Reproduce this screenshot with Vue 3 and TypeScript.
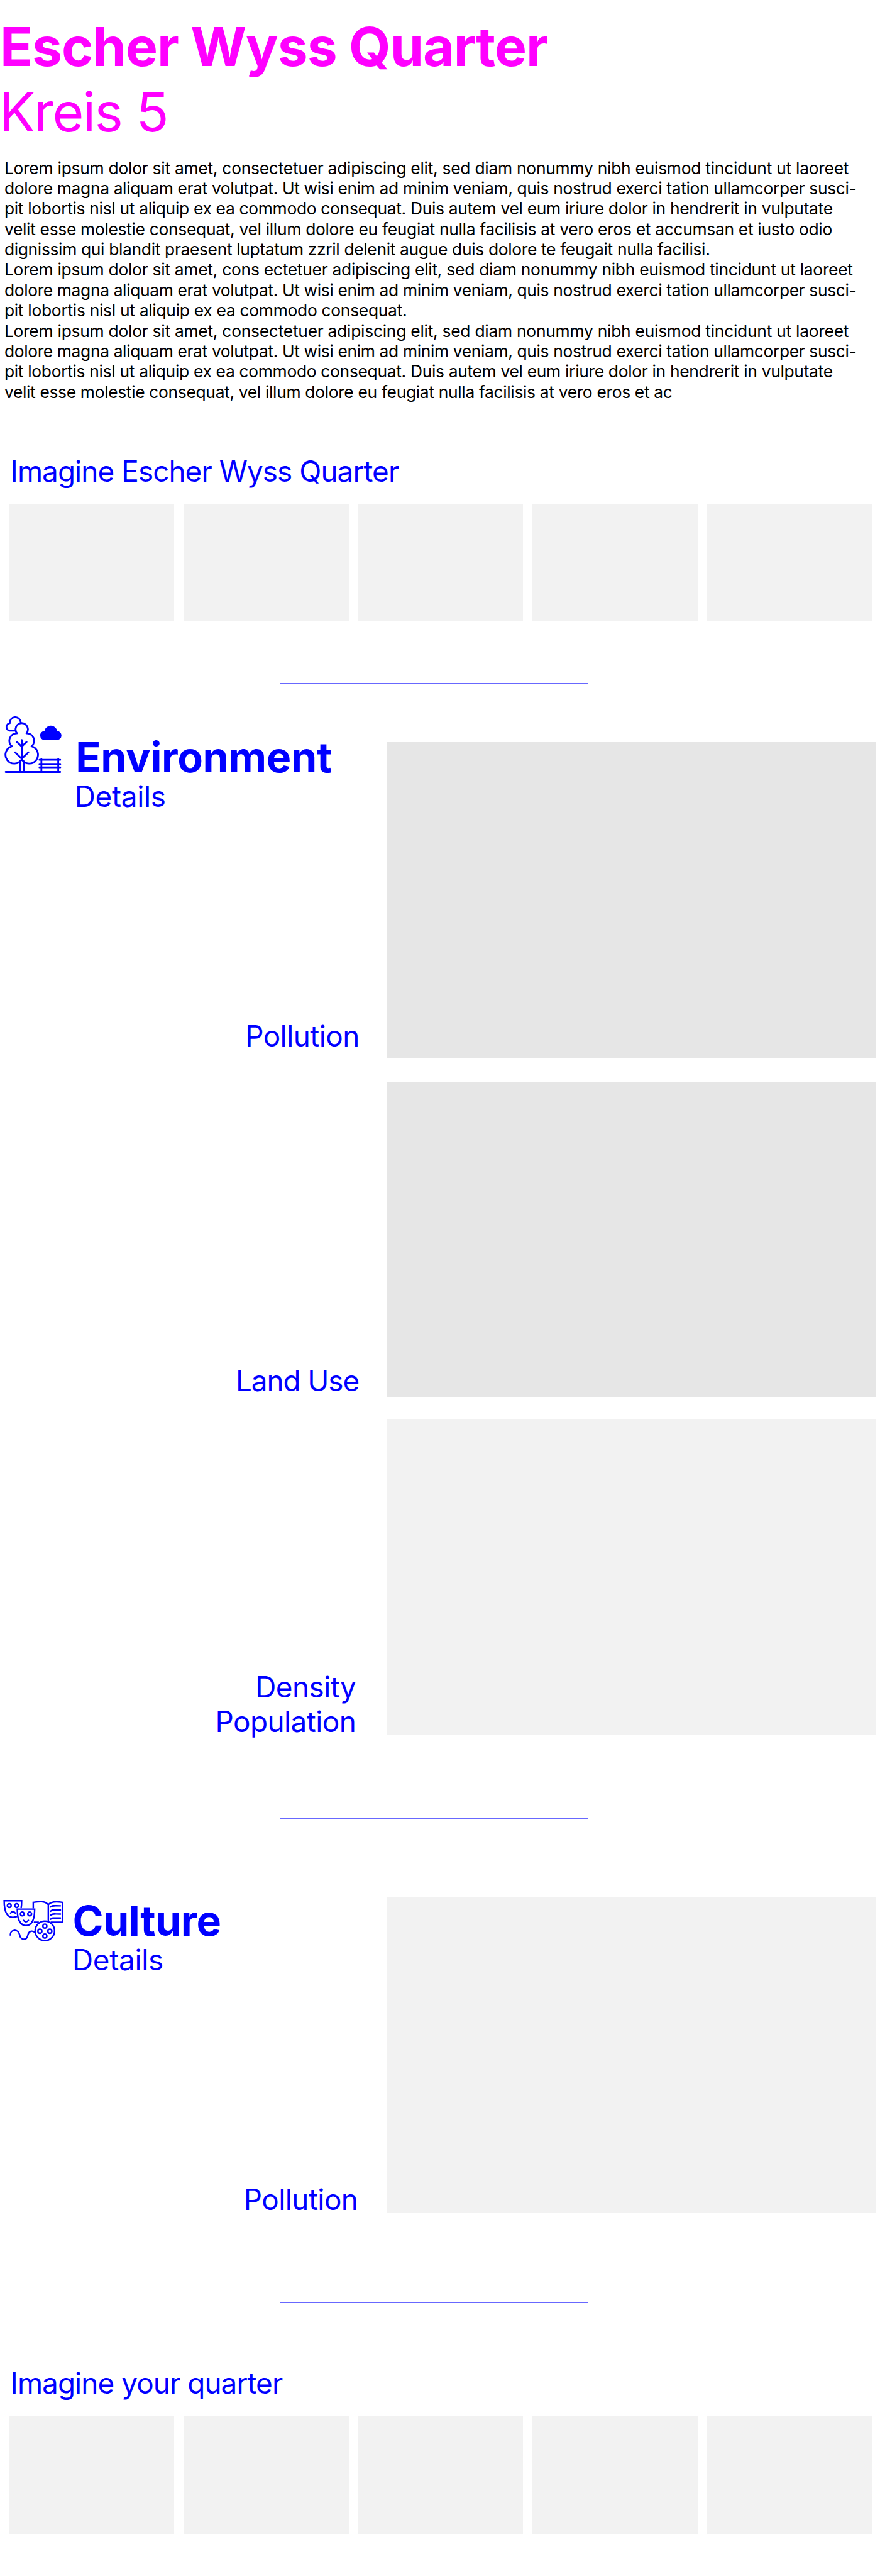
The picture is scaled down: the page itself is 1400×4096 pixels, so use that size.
<script setup lang="ts">
interface Line {
  text: string
  tracking: number
}

const paragraph: Line[] = [
  { text: 'Lorem ipsum dolor sit amet, consectetuer adipiscing elit, sed diam nonummy nibh euismod tincidunt ut laoreet', tracking: -0.259 },
  { text: 'dolore magna aliquam erat volutpat. Ut wisi enim ad minim veniam, quis nostrud exerci tation ullamcorper susci-', tracking: -0.361 },
  { text: 'pit lobortis nisl ut aliquip ex ea commodo consequat. Duis autem vel eum iriure dolor in hendrerit in vulputate', tracking: -0.318 },
  { text: 'velit esse molestie consequat, vel illum dolore eu feugiat nulla facilisis at vero eros et accumsan et iusto odio', tracking: -0.31 },
  { text: 'dignissim qui blandit praesent luptatum zzril delenit augue duis dolore te feugait nulla facilisi.', tracking: -0.339 },
  { text: 'Lorem ipsum dolor sit amet, cons ectetuer adipiscing elit, sed diam nonummy nibh euismod tincidunt ut laoreet', tracking: -0.265 },
  { text: 'dolore magna aliquam erat volutpat. Ut wisi enim ad minim veniam, quis nostrud exerci tation ullamcorper susci-', tracking: -0.361 },
  { text: 'pit lobortis nisl ut aliquip ex ea commodo consequat.', tracking: -0.29 },
  { text: 'Lorem ipsum dolor sit amet, consectetuer adipiscing elit, sed diam nonummy nibh euismod tincidunt ut laoreet', tracking: -0.259 },
  { text: 'dolore magna aliquam erat volutpat. Ut wisi enim ad minim veniam, quis nostrud exerci tation ullamcorper susci-', tracking: -0.361 },
  { text: 'pit lobortis nisl ut aliquip ex ea commodo consequat. Duis autem vel eum iriure dolor in hendrerit in vulputate', tracking: -0.318 },
  { text: 'velit esse molestie consequat, vel illum dolore eu feugiat nulla facilisis at vero eros et ac', tracking: -0.33 },
]

const bookLines: number[] = [117, 150, 182, 213]
</script>

<template>
  <main class="page">
    <header class="intro">
      <h1 class="title">Escher Wyss Quarter</h1>
      <p class="district">Kreis 5</p>
      <div class="copy">
        <div v-for="(line, i) in paragraph" :key="i" :style="{ letterSpacing: line.tracking + 'px' }">{{ line.text }}</div>
      </div>
    </header>

    <section class="imagine">
      <h2 class="subhead">Imagine Escher Wyss Quarter</h2>
      <div class="gallery">
        <div v-for="n in 5" :key="n" class="card"></div>
      </div>
    </section>

    <hr class="rule rule-first" />

    <section class="topic environment">
      <div class="row">
        <div class="side">
          <div class="heading">
            <svg class="icon" viewBox="36 60 450 445" fill="none" stroke="currentColor" stroke-width="14" stroke-linecap="round" stroke-linejoin="round">
              <path d="M119 173H76A30 30 0 0 1 78 114A43 43 0 0 1 164 106" />
              <path d="M172 398A69 69 0 1 1 95 295A58 58 0 0 1 135 193A48.5 48.5 0 1 1 209 193A58 58 0 0 1 249 295A69 69 0 1 1 172 398" />
              <path d="M172 246V398M134 261L172 297L210 261M120 342L172 393L224 342M46 496H474" />
              <path d="M157 412V494M187 412V494" />
              <path d="M311 401H474M311 438H474M311 460H474M326 393V494M458 393V494" />
              <path d="M354 246A36 36 0 0 1 350 174A51 51 0 0 1 450 174A36 36 0 0 1 445 246Z" fill="currentColor" stroke="none" />
            </svg>
            <div class="names">
              <h2 class="name">Environment</h2>
              <p class="details">Details</p>
            </div>
          </div>
          <p class="caption pollution">Pollution</p>
        </div>
        <div class="panel dark"></div>
      </div>
      <div class="row second">
        <div class="side"><p class="caption land">Land Use</p></div>
        <div class="panel dark"></div>
      </div>
      <div class="row third">
        <div class="side"><p class="caption density">Density<br />Population</p></div>
        <div class="panel"></div>
      </div>
    </section>

    <hr class="rule rule-second" />

    <section class="topic culture">
      <div class="row">
        <div class="side">
          <div class="heading">
            <svg class="icon" viewBox="22 66 476 332" fill="none" stroke="currentColor" stroke-width="12" stroke-linecap="round">
              <path d="M133 200C120 205 109 207 98 207C54 207 30 160 30 77H167C167 100 166 118 163 135" stroke-linecap="butt" />
              <circle cx="70" cy="115" r="15" />
              <circle cx="128" cy="115" r="15" />
              <path d="M80 174Q99 151 118 174" />
              <path d="M133 143H269C269 225 245 271 201 271C157 271 133 225 133 143Z" />
              <circle cx="172" cy="181" r="15" />
              <circle cx="230" cy="181" r="15" />
              <path d="M182 231Q201 255 220 231" />
              <path d="M258 138V90C305 82 349 77 376 108C398 82 440 82 487 90V246H394M376 108V242M262 246H302" stroke-linecap="butt" />
              <path v-for="y in bookLines" :key="y" :d="`M394 ${y + 9}C411 ${y - 6} 420 ${y} 471 ${y}`" />
              <circle cx="349" cy="313" r="76" />
              <circle cx="349" cy="276" r="16" />
              <circle cx="310" cy="316" r="16" />
              <circle cx="388" cy="316" r="16" />
              <circle cx="349" cy="354" r="16" />
              <path d="M78 345C78 300 138 296 150 340C160 392 208 390 216 345C226 308 258 310 272 328" />
            </svg>
            <div class="names">
              <h2 class="name">Culture</h2>
              <p class="details">Details</p>
            </div>
          </div>
          <p class="caption pollution">Pollution</p>
        </div>
        <div class="panel"></div>
      </div>
    </section>

    <hr class="rule rule-third" />

    <section class="imagine own">
      <h2 class="subhead">Imagine your quarter</h2>
      <div class="gallery">
        <div v-for="n in 5" :key="n" class="card"></div>
      </div>
    </section>
  </main>
</template>

<style>
body {
  margin: 0;
  background: #fff;
}
</style>

<style scoped>
.page {
  box-sizing: border-box;
  width: 1400px;
  height: 4096px;
  overflow: hidden;
  font-family: Inter, 'Liberation Sans', sans-serif;
  color: #00f;
  white-space: nowrap;
}

h1,
h2,
p {
  margin: 0;
  font-weight: 400;
}

.intro {
  box-sizing: border-box;
  padding-top: 23.3px;
  height: 720.8px;
}

.title,
.district {
  font-size: 85.7px;
  line-height: 103.5px;
  color: #f0f;
}

.title {
  font-weight: 700;
  letter-spacing: -0.98px;
}

.district {
  margin-left: -1.5px;
  padding-top: 0.7px;
  letter-spacing: -1.75px;
}

.copy {
  padding: 19.6px 0 0 6.9px;
  font-size: 26.4px;
  line-height: 32.38px;
  color: #000;
}

.subhead,
.details,
.caption {
  font-size: 45.8px;
  letter-spacing: -0.52px;
}

.subhead {
  padding: 0.9px 0 0 16.5px;
  line-height: 56px;
  letter-spacing: -0.9px;
}

.gallery {
  display: grid;
  grid-template-columns: repeat(5, 263.2px);
  gap: 14.3px;
  padding: 24.5px 0 0 14.2px;
}

.card {
  height: 186.2px;
  background: #f2f2f2;
}

.rule {
  width: 488.9px;
  height: 1.2px;
  margin: 0 0 0 446.3px;
  border: 0;
  background: #6868ff;
}

.rule-first {
  margin-top: 97.4px;
}

.rule-second {
  margin-top: 133px;
}

.rule-third {
  margin-top: 142px;
}

.environment {
  padding-top: 93.1px;
}

.culture {
  padding-top: 124.3px;
}

.own {
  padding-top: 99.2px;
}

.row {
  display: flex;
  height: 502.1px;
}

.second {
  margin-top: 37.8px;
}

.third {
  margin-top: 34px;
}

.side {
  display: flex;
  flex-direction: column;
  justify-content: space-between;
  width: 614.8px;
}

.panel {
  width: 778.9px;
  background: #f2f2f2;
}

.dark {
  background: #e6e6e6;
}

.heading {
  display: flex;
  align-items: flex-start;
}

.icon {
  display: block;
  flex: none;
}

.environment .heading {
  gap: 21.6px;
  margin-top: -41.3px;
  padding-left: 7.3px;
}

.environment .icon {
  width: 91.3px;
  height: 90.3px;
}

.environment .names {
  padding-top: 32.6px;
}

.culture .heading {
  gap: 14.5px;
  margin-top: 3.6px;
  padding-left: 4.5px;
}

.culture .icon {
  width: 96.6px;
  height: 67.4px;
}

.culture .names {
  padding-top: 0.9px;
}

.name {
  font-size: 66.4px;
  font-weight: 700;
  line-height: 66px;
  letter-spacing: -0.35px;
}

.culture .name {
  letter-spacing: -0.6px;
}

.details {
  margin: 1.8px 0 0 -1.4px;
  line-height: 55.1px;
  letter-spacing: -0.3px;
}

.culture .details {
  margin-left: -0.6px;
}

.caption {
  margin-top: auto;
  line-height: 55.1px;
  text-align: right;
}

.pollution {
  margin-right: 43px;
  margin-bottom: 7.1px;
}

.land {
  margin-right: 43.7px;
  margin-bottom: -0.7px;
  letter-spacing: -1.05px;
}

.density {
  margin-right: 48.5px;
  margin-bottom: -6.9px;
}

.culture .pollution {
  margin-right: 45.4px;
  margin-bottom: -6.3px;
}
</style>
